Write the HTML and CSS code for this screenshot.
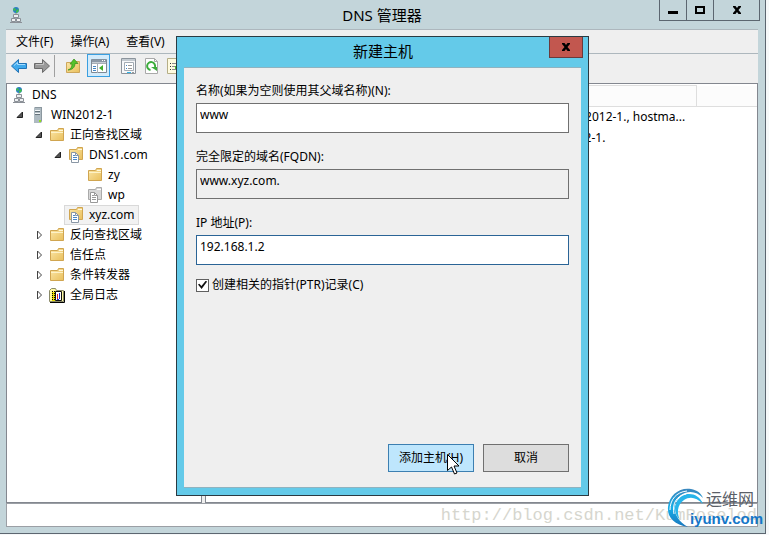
FILE: index.html
```
<!DOCTYPE html>
<html lang="zh-CN">
<head>
    <meta charset="UTF-8">
    <meta name="viewport" content="width=device-width, initial-scale=1.0">
    <title>DNS 管理器</title>
    <link rel="stylesheet" href="styles.css">
</head>
<body>
    <!-- Shared icons -->
    <svg class="sprite" aria-hidden="true">
        <defs>
            <linearGradient id="gold" x1="0" y1="0" x2="1" y2="1">
                <stop offset="0" stop-color="#fbe7a8"/>
                <stop offset="1" stop-color="#e9bf5c"/>
            </linearGradient>
            <linearGradient id="swirl" x1="0" y1="0" x2="0" y2="1">
                <stop offset="0" stop-color="#3a86bd"/>
                <stop offset="0.5" stop-color="#16aee8"/>
                <stop offset="1" stop-color="#1a76bd"/>
            </linearGradient>
        </defs>
        <symbol id="dns" viewBox="0 0 16 16">
            <circle cx="8" cy="3" r="3" fill="#2b7fc0"/>
            <path d="M6 1l2 1-1 2-2-1zM8 4l2-2 1 1-1 2-2 1z" fill="#3fbf4b"/>
            <path d="M8 6v2" stroke="#888"/>
            <g fill="#eef0f2" stroke="#8b9097">
                <path d="M5.500 7.500h5v3h-5zM3.500 11.500h4v3h-4zM8.500 11.500h4v3h-4z"/>
            </g>
            <path d="M2 15.500h6M8 15.500h6" stroke="#8b9097"/>
        </symbol>
        <symbol id="server" viewBox="0 0 16 16">
            <path d="M4 1l1-1h7v14l-1 2H4z" fill="#8b979f"/>
            <path d="M4 1h7v15H4z" fill="#aebac1"/>
            <path d="M5 3.500h5M5 6.500h5" stroke="#f4f7f8"/>
            <path d="M5 4.500h5M5 7.500h5" stroke="#65727a"/>
            <path d="M9 13h2v2H9z" fill="#8fe01e"/>
        </symbol>
        <symbol id="folder" viewBox="0 0 16 16">
            <path d="M1.500 3.500h7l1-2h5v12h-13z" fill="url(#gold)" stroke="#d0a550"/>
            <path d="M10 3.500h4" stroke="#fff8dc"/>
            <path d="M2 5.500h12" stroke="#fdf2c8"/>
        </symbol>
        <symbol id="zone" viewBox="0 0 16 16">
            <path d="M1.500 2.500h7l1-2h5v12h-13z" fill="url(#gold)" stroke="#d0a550"/>
            <path d="M10 2.500h4" stroke="#fff8dc"/>
            <path d="M3.500 5.500h4l3 3v7h-7z" fill="#fff" stroke="#8a97a5"/>
            <path d="M7.500 5.500v3h3" fill="none" stroke="#8a97a5"/>
            <path d="M5 8.500h2M5 10.500h4M5 12.500h4" stroke="#4a88c8"/>
        </symbol>
        <symbol id="zone-grey" viewBox="0 0 16 16">
            <path d="M1.500 2.500h7l1-2h5v12h-13z" fill="#d8d8d8" stroke="#aaa"/>
            <path d="M10 2.500h4" stroke="#fff"/>
            <path d="M3.500 5.500h4l3 3v7h-7z" fill="#fff" stroke="#999"/>
            <path d="M7.500 5.500v3h3" fill="none" stroke="#999"/>
            <path d="M5 8.500h2M5 10.500h4M5 12.500h4" stroke="#999"/>
        </symbol>
        <symbol id="log" viewBox="0 0 16 16">
            <path d="M0.500 14.500V3.500l2-2h4l1 2h7v11z" fill="#fff9a0" stroke="#8a8a6a"/>
            <path d="M1 15.500h14.500V4" fill="none" stroke="#000"/>
            <path d="M3 5h4v9H3z" fill="#e8dc00"/>
            <path d="M3.500 4v10M5.500 4v10" stroke="#000" stroke-dasharray="1 1"/>
            <path d="M6.500 4.500h6v9h-6z" fill="#fff" stroke="#111"/>
            <path d="M8.500 7v5" stroke="#e02020"/>
            <path d="M10.500 6v6M8 12.500h2" stroke="#2030d0"/>
        </symbol>
        <symbol id="open" viewBox="0 0 8 8">
            <path d="M6.500 1v5.500H1z" fill="#555" stroke="#222"/>
        </symbol>
        <symbol id="closed" viewBox="0 0 8 10">
            <path d="M2.500 1v8l4-4z" fill="#fff" stroke="#444"/>
        </symbol>
        <symbol id="cross" viewBox="0 0 10 8">
            <path d="M1 0h2.500L5 2 6.500 0H9v1L6.500 4 9 7v1H6.500L5 6 3.500 8H1V7l2.500-3L1 1z" fill="#000"/>
        </symbol>
    </svg>

    <div class="window">
        <header class="titlebar">
            <svg class="icon"><use href="#dns"/></svg>
            <h1>DNS 管理器</h1>
            <div class="window-buttons">
                <button type="button" aria-label="最小化"><svg width="10" height="8"><path d="M0 5h10v3H0z"/></svg></button>
                <button type="button" aria-label="最大化"><svg width="10" height="8"><path d="M1 1h8v6H1z" fill="none" stroke="#000" stroke-width="2"/></svg></button>
                <button type="button" class="wide" aria-label="关闭"><svg width="10" height="8"><use href="#cross"/></svg></button>
            </div>
        </header>

        <nav class="menubar">
            <button type="button">文件(F)</button>
            <button type="button">操作(A)</button>
            <button type="button">查看(V)</button>
        </nav>

        <div class="toolbar">
            <button type="button" aria-label="后退"><svg width="16" height="16"><path d="M0.500 8l7-6.500v4h8v5h-8v4z" fill="#3fa9ec" stroke="#2273b5"/><path d="M3 7.500l3.500-3V6.500H14" fill="none" stroke="#a5dcff"/></svg></button>
            <button type="button" aria-label="前进"><svg width="16" height="16"><path d="M15.500 8l-7-6.500v4h-8v5h8v4z" fill="#999" stroke="#6b6b6b"/><path d="M2 6.500h7.500V4" fill="none" stroke="#c4c4c4"/></svg></button>
            <span class="separator"></span>
            <button type="button" aria-label="上一级"><svg width="16" height="16"><path d="M1.500 4.500h7l1-1h5v11h-13z" fill="url(#gold)" stroke="#cda65a"/><path d="M3 12c3-1 4-3 4-6H5l4-5 4 4.500h-3c0 4-3 6.500-7 6.500z" fill="#55c32c" stroke="#348d18" stroke-width="0.700"/></svg></button>
            <button type="button" class="active" aria-label="显示控制台树"><svg width="16" height="16"><path d="M0.500 1.500h15v13H0.500z" fill="#fff" stroke="#7f8994"/><path d="M1 3h14" stroke="#8b98a6" stroke-width="3"/><path d="M11 2.500h1M13 2.500h1" stroke="#fff"/><path d="M1 5.500h14M6.500 6v9" stroke="#a5adb5"/><path d="M2 8.500h3M2 10.500h3M2 12.500h3" stroke="#4386c5"/><path d="M12 7v6L8 10z" fill="#43ae2c"/></svg></button>
            <button type="button" class="spaced" aria-label="属性"><svg width="16" height="16"><path d="M0.500 0.500h14v15H0.500z" fill="#f7f8fa" stroke="#8c949c"/><path d="M1 2h13" stroke="#c3cad0" stroke-width="2"/><path d="M3.500 4.500h9v8h-9z" fill="#fff" stroke="#a3abb3"/><path d="M5 7.500h1M5 10.500h1" stroke="#4386c5"/><path d="M7 7.500h4M7 10.500h4" stroke="#999"/><path d="M6 14.500h4" stroke="#31b3e5"/><path d="M11 14.500h2" stroke="#999"/></svg></button>
            <button type="button" aria-label="刷新"><svg width="16" height="16"><path d="M1.500 0.500h9l3 3v12h-12z" fill="#fff" stroke="#a9a9a9"/><path d="M10.500 0.500v3h3" fill="none" stroke="#a9a9a9"/><path d="M6.500 12A4 4 0 1 1 11 9" fill="none" stroke="#3cac3c" stroke-width="2"/><path d="M7 9h6v4z" fill="#3cac3c"/></svg></button>
            <button type="button" aria-label="导出列表"><svg width="16" height="16"><path d="M0.500 0.500h10l3 3v12h-13z" fill="#fffbe0" stroke="#b5ae87"/><path d="M3 5.500h1M3 8.500h1M3 11.500h1" stroke="#333"/><path d="M5 5.500h6M5 8.500h4M5 11.500h4" stroke="#8a8a8a"/><path d="M8 8h4V6l4 3.500-4 3.500v-2H8z" fill="#4cbf32"/></svg></button>
        </div>

        <main class="panes">
            <ul class="tree">
                <li>
                    <div class="row"><span class="item"><svg class="icon"><use href="#dns"/></svg>DNS</span></div>
                    <ul>
                        <li>
                            <div class="row"><svg class="twisty"><use href="#open"/></svg><span class="item"><svg class="icon"><use href="#server"/></svg>WIN2012-1</span></div>
                            <ul>
                                <li>
                                    <div class="row"><svg class="twisty"><use href="#open"/></svg><span class="item"><svg class="icon"><use href="#folder"/></svg>正向查找区域</span></div>
                                    <ul>
                                        <li>
                                            <div class="row"><svg class="twisty"><use href="#open"/></svg><span class="item"><svg class="icon"><use href="#zone"/></svg>DNS1.com</span></div>
                                            <ul>
                                                <li><div class="row leaf"><span class="item"><svg class="icon"><use href="#folder"/></svg>zy</span></div></li>
                                                <li><div class="row leaf"><span class="item"><svg class="icon"><use href="#zone-grey"/></svg>wp</span></div></li>
                                            </ul>
                                        </li>
                                        <li><div class="row leaf"><span class="item selected"><svg class="icon"><use href="#zone"/></svg>xyz.com</span></div></li>
                                    </ul>
                                </li>
                                <li><div class="row"><svg class="twisty"><use href="#closed"/></svg><span class="item"><svg class="icon"><use href="#folder"/></svg>反向查找区域</span></div></li>
                                <li><div class="row"><svg class="twisty"><use href="#closed"/></svg><span class="item"><svg class="icon"><use href="#folder"/></svg>信任点</span></div></li>
                                <li><div class="row"><svg class="twisty"><use href="#closed"/></svg><span class="item"><svg class="icon"><use href="#folder"/></svg>条件转发器</span></div></li>
                                <li><div class="row"><svg class="twisty"><use href="#closed"/></svg><span class="item"><svg class="icon"><use href="#log"/></svg>全局日志</span></div></li>
                            </ul>
                        </li>
                    </ul>
                </li>
            </ul>

            <div class="records">
                <table>
                    <thead>
                        <tr><th class="name"></th><th class="data"></th><th></th></tr>
                    </thead>
                    <tbody>
                        <tr><td></td><td>[8], win2012-1., hostma...</td><td></td></tr>
                        <tr><td></td><td>win2012-1.</td><td></td></tr>
                    </tbody>
                </table>
            </div>
        </main>

        <footer class="statusbar">http://blog.csdn.net/KumRoselod</footer>
    </div>

    <!-- New host dialog -->
    <form class="dialog" role="dialog" aria-labelledby="dialogTitle">
        <div class="dialog-title">
            <h2 id="dialogTitle">新建主机</h2>
            <button type="button" class="dialog-close" aria-label="关闭"><svg width="10" height="8"><use href="#cross"/></svg></button>
        </div>
        <div class="dialog-body">
            <div class="field">
                <label for="hostName">名称(如果为空则使用其父域名称)(N):</label>
                <input type="text" id="hostName" value="www">
            </div>
            <div class="field">
                <label for="fqdn">完全限定的域名(FQDN):</label>
                <input type="text" id="fqdn" value="www.xyz.com." readonly>
            </div>
            <div class="field">
                <label for="ip">IP 地址(P):</label>
                <input type="text" id="ip" class="focused" value="192.168.1.2">
            </div>
            <div class="check">
                <input type="checkbox" id="ptr" checked>
                <label for="ptr">创建相关的指针(PTR)记录(C)</label>
            </div>
            <div class="actions">
                <button type="button" class="primary">添加主机(H)
                    <svg class="cursor" width="13" height="21" aria-hidden="true"><path d="M0.500 0.500v16l4-3.500 3 7 2.500-1-3-7h5z" fill="#fff" stroke="#000"/></svg>
                </button>
                <button type="button">取消</button>
            </div>
        </div>
    </form>

    <div class="brand">
        <svg width="40" height="40" viewBox="0 0 38 40" aria-hidden="true">
            <path d="M21 39C7 37 0 29 1 19 2 7 13-1 24 1c6 1 10 4 12 9C30 3 21 2 14 7 4 15 5 30 21 39z" fill="url(#swirl)"/>
            <path d="M13 32C6 25 6 14 15 8c7-4 17-2 21 8-7-7-13-8-19-4-6 4-8 12-4 20z" fill="#27b4ea"/>
            <path d="M3 22C3 12 9 4 20 3M7 26C5 16 9 8 19 6" fill="none" stroke="#fff"/>
        </svg>
        <div class="brand-text">
            <span class="brand-name">运维网</span>
            <span class="brand-site">iyunv.com</span>
        </div>
    </div>
</body>
</html>
```
FILE: styles.css
```
* {
    box-sizing: border-box;
}

body {
    margin: 0;
    height: 100vh;
    overflow: hidden;
    position: relative;
    display: flex;
    background-color: #f6f8f9;
    color: #000;
    font-family: "Noto Sans", "Noto Sans CJK SC", sans-serif;
    font-size: 12px;
    line-height: 20px;
}

button,
input {
    font: inherit;
    color: inherit;
    margin: 0;
}

h1,
h2 {
    margin: 0;
    font-size: 15px;
    font-weight: normal;
}

ul {
    list-style: none;
    margin: 0;
    padding: 0;
}

.sprite {
    position: absolute;
    width: 0;
    height: 0;
}

.icon {
    width: 16px;
    height: 16px;
    flex: none;
}

/* Main window */
.window {
    flex: 1;
    display: flex;
    flex-direction: column;
    margin: 0 3px 1px 0;
    padding: 0 7px 6px 6px;
    background-color: #c3d5da;
    border: solid #5c6670;
    border-width: 0 1px 1px 0;
}

.titlebar {
    display: grid;
    grid-template-columns: 100px 1fr 100px;
    height: 29px;
    align-items: center;
}

.titlebar .icon {
    margin-left: 2px;
}

.titlebar h1 {
    line-height: 28px;
    text-align: center;
}

.window-buttons {
    display: flex;
    align-self: start;
    justify-content: flex-end;
    margin-right: -2px;
}

.window-buttons button {
    width: 28px;
    height: 21px;
    padding: 0;
    margin-left: -1px;
    background: none;
    border: 1px solid #5c6670;
    border-top: none;
}

.window-buttons .wide {
    width: 47px;
}

.menubar {
    display: flex;
    gap: 17px;
    height: 25px;
    padding: 2px 10px;
    background-color: #efefef;
    border: solid #adb7bd;
    border-width: 1px 0;
}

.menubar button {
    padding: 0;
    background: none;
    border: none;
}

.toolbar {
    display: flex;
    align-items: center;
    height: 29px;
    padding: 0 0 6px 4px;
    background-color: #efefef;
}

.toolbar button {
    display: flex;
    align-items: center;
    justify-content: center;
    width: 23px;
    height: 23px;
    padding: 0 6px 0 0;
    background: none;
    border: none;
}

.toolbar .active {
    padding: 0;
    background-color: #d3ebfb;
    border: 1px solid #3a9fe0;
}

.toolbar .spaced {
    margin-left: 10px;
}

.separator {
    width: 1px;
    height: 22px;
    margin: 0 9px 0 -2px;
    background-color: #a0a0a0;
}

.panes {
    flex: 1;
    display: grid;
    grid-template-columns: 196px 1fr;
    gap: 3px;
    min-height: 0;
    background-color: #efefef;
}

.tree,
.records {
    background-color: #fff;
    border: 1px solid #83878f;
    overflow: hidden;
}

/* Tree */
.tree {
    padding-top: 1px;
}

.tree > li > ul {
    padding-left: 6px;
}

.tree ul ul {
    padding-left: 19px;
}

.row {
    display: flex;
    align-items: center;
    height: 20px;
    white-space: nowrap;
}

.leaf {
    padding-left: 13px;
}

.twisty {
    width: 8px;
    height: 10px;
    margin: 0 2px 0 3px;
}

.item {
    display: flex;
    align-items: center;
    gap: 5px;
    height: 20px;
    padding: 0 3px;
    border: 1px solid transparent;
    border-width: 0 1px;
}

.item.selected {
    background-color: #f2f2f2;
    border: 1px solid #d9d9d9;
}

/* Record list */
table {
    width: 100%;
    margin-top: 1px;
    border-collapse: collapse;
    table-layout: fixed;
}

th {
    height: 21px;
    padding: 0;
    background-color: #fcfcfc;
    border: solid #dedede;
    border-width: 1px 1px 1px 0;
}

th:last-child {
    border-width: 0 0 1px;
}

.name {
    width: 338px;
}

.data {
    width: 152px;
}

td {
    height: 21px;
    padding: 0;
    white-space: nowrap;
}

.statusbar {
    height: 24px;
    overflow: hidden;
    background-color: #fff;
    border: 1px solid #9b9fa5;
    color: #d6d6ce;
    font-family: "Liberation Mono", monospace;
    font-size: 17px;
    line-height: 24px;
    text-align: right;
}

/* New host dialog */
.dialog {
    position: absolute;
    top: 36px;
    right: 180px;
    bottom: 39px;
    left: 176px;
    display: flex;
    flex-direction: column;
    padding: 0 7px 7px;
    background-color: #64cae9;
    border: 1px solid #2b3a42;
}

.dialog-title {
    display: grid;
    grid-template-columns: 33px 1fr 34px;
    height: 30px;
    margin-right: -2px;
}

.dialog-title h2 {
    grid-column: 2;
    line-height: 28px;
    text-align: center;
}

.dialog-close {
    height: 21px;
    padding: 0;
    background-color: #c2574f;
    border: 1px solid #6b3a3c;
    border-top: none;
}

.dialog-body {
    flex: 1;
    display: flex;
    flex-direction: column;
    padding: 13px 12px 15px;
    background-color: #efefef;
    border: solid #8fb3c0;
    border-width: 1px 0;
}

.field {
    display: flex;
    flex-direction: column;
    gap: 2px;
    margin-bottom: 14px;
}

.field input {
    height: 30px;
    padding: 0 3px 7px;
    background-color: #fff;
    border: 1px solid #707070;
    border-radius: 0;
    outline: none;
}

.field input[readonly] {
    background-color: #efefef;
}

.field .focused {
    border-color: #2a6496;
}

.check {
    display: flex;
    align-items: center;
    gap: 3px;
    margin-top: -4px;
}

.check input {
    appearance: none;
    width: 13px;
    height: 13px;
    background-color: #fff;
    border: 1px solid #606060;
    display: grid;
    place-items: center;
}

.check input:checked::before {
    content: "";
    width: 9px;
    height: 9px;
    background-color: #111;
    clip-path: polygon(0 45%, 15% 35%, 38% 60%, 88% 0, 100% 15%, 40% 95%);
}

.actions {
    display: flex;
    justify-content: flex-end;
    gap: 9px;
    margin-top: auto;
}

.actions button {
    position: relative;
    width: 86px;
    height: 28px;
    padding: 0;
    background-color: #dddddd;
    border: 1px solid #707070;
}

.actions .primary {
    background-color: #bee6fd;
    border-color: #3c7fb1;
}

/* Mouse pointer resting on the button */
.cursor {
    position: absolute;
    top: 9px;
    left: 58px;
}

/* Site badge in the corner */
.brand {
    position: absolute;
    right: 6px;
    bottom: 7px;
    display: flex;
}

.brand-text {
    display: flex;
    flex-direction: column;
    align-items: flex-end;
    margin-left: -16px;
    white-space: nowrap;
}

.brand-name {
    padding-right: 9px;
    color: #5b5f68;
    font-size: 16px;
    line-height: 22px;
}

.brand-site {
    color: #1577c8;
    font-family: "Liberation Sans", Arial, sans-serif;
    font-size: 15px;
    font-weight: bold;
    line-height: 18px;
}
```
